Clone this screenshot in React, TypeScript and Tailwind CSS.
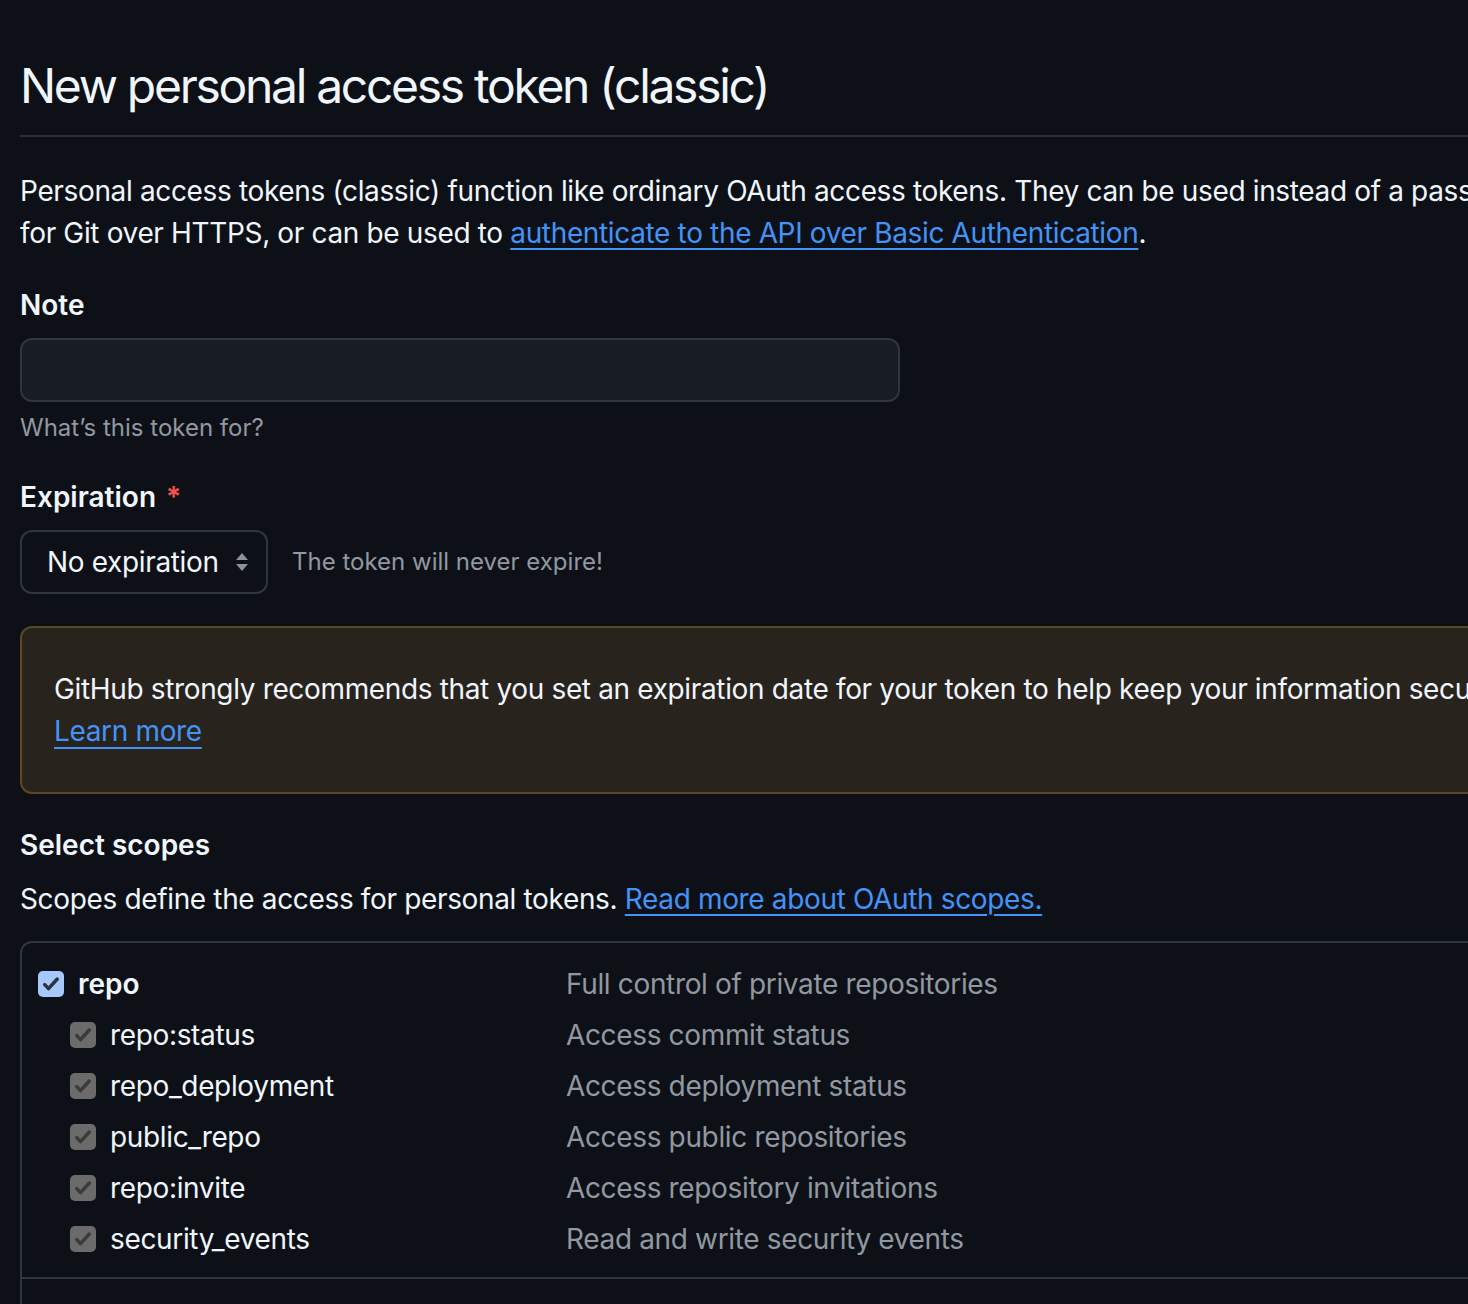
import React from 'react'

const scopes = [
  { name: 'repo:status', desc: 'Access commit status' },
  { name: 'repo_deployment', desc: 'Access deployment status' },
  { name: 'public_repo', desc: 'Access public repositories' },
  { name: 'repo:invite', desc: 'Access repository invitations' },
  { name: 'security_events', desc: 'Read and write security events' },
]

function Check({ primary }: { primary?: boolean }) {
  return (
    <span
      className={`flex h-[26px] w-[26px] shrink-0 items-center justify-center rounded-[5px] ${primary ? 'bg-[#a6c8ff]' : 'bg-[#6b6b6b]'}`}
    >
      <svg width="20" height="20" viewBox="0 0 16 16" fill="none">
        <path d="M3 8.5l3 3.2L13 4" stroke={primary ? '#2d333b' : '#3b3b3b'} strokeWidth="2.8" strokeLinecap="round" strokeLinejoin="round" />
      </svg>
    </span>
  )
}

export default function App() {
  return (
    <div className="min-h-[1304px] w-full overflow-hidden bg-[#0d1117] font-['Inter',sans-serif] text-[#f0f6fc]">
      <div className="w-[1900px] pl-[20px] pt-[56px]">
        {/* Header */}
        <div className="border-b-2 border-[#2a2f37] pb-[19px]">
          <h1 className="text-[48px] font-normal leading-[60px] tracking-[-2.3px]">New personal access token (classic)</h1>
        </div>

        <p className="mt-[33px] text-[28px] leading-[42px] tracking-[-0.35px] whitespace-nowrap">
          Personal access tokens (classic) function like ordinary OAuth access tokens. They can be used instead of a password
          <br />
          for Git over HTTPS, or can be used to{' '}
          <a className="text-[#4493f8] underline underline-offset-[5px] decoration-[2px]">authenticate to the API over Basic Authentication</a>.
        </p>

        {/* Note */}
        <div className="mt-[30px] text-[28px] font-semibold leading-[42px]">Note</div>
        <div className="mt-[12px] h-[64px] w-[880px] rounded-[12px] border-2 border-[#30363d] bg-[#181c23]" />
        <div className="mt-[8px] text-[24px] leading-[36px] text-[#9198a1]">What’s this token for?</div>

        {/* Expiration */}
        <div className="mt-[30px] flex items-center text-[28px] font-semibold leading-[42px]">
          Expiration
          <span className="ml-[10px] text-[#f85149]">*</span>
        </div>
        <div className="mt-[12px] flex items-center">
          <div className="flex h-[64px] w-[248px] items-center justify-between rounded-[12px] border-2 border-[#30363d] pl-[25px] pr-[16px] text-[28px] tracking-[-0.35px]">
            No expiration
            <svg width="16" height="24" viewBox="0 0 16 24">
              <path d="M8 3l6 7H2z" fill="#8b929b" />
              <path d="M8 21l6-7H2z" fill="#8b929b" />
            </svg>
          </div>
          <div className="ml-[24px] text-[24px] text-[#9198a1]">The token will never expire!</div>
        </div>

        {/* Warning */}
        <div className="mt-[32px] rounded-[12px] border-2 border-[#5b4720] bg-[#29231d] px-[32px] py-[40px] text-[28px] leading-[42px] tracking-[-0.35px] whitespace-nowrap">
          GitHub strongly recommends that you set an expiration date for your token to help keep your information secure.
          <br />
          <a className="text-[#4493f8] underline underline-offset-[6px] decoration-[2px]">Learn more</a>
        </div>

        {/* Scopes */}
        <div className="mt-[30px] text-[28px] font-semibold leading-[42px]">Select scopes</div>
        <p className="mt-[12px] text-[28px] leading-[42px] tracking-[-0.35px]">
          Scopes define the access for personal tokens.{' '}
          <a className="text-[#4493f8] underline underline-offset-[5px] decoration-[2px]">Read more about OAuth scopes.</a>
        </p>

        <div className="mt-[21px] rounded-tl-[12px] border-l-2 border-t-2 border-[#30363d] text-[28px] tracking-[-0.35px]">
          <div className="pb-[17px] pt-[20px] border-b-2 border-[#30363d]">
            <div className="flex h-[42px] items-center">
              <div className="flex w-[544px] items-center pl-[16px]">
                <Check primary />
                <span className="ml-[14px] font-semibold tracking-normal">repo</span>
              </div>
              <span className="text-[#9198a1]">Full control of private repositories</span>
            </div>
            {scopes.map(s => (
              <div key={s.name} className="mt-[9px] flex h-[42px] items-center">
                <div className="flex w-[544px] items-center pl-[48px]">
                  <Check />
                  <span className="ml-[14px]">{s.name}</span>
                </div>
                <span className="text-[#9198a1]">{s.desc}</span>
              </div>
            ))}
          </div>
          <div className="h-[40px]" />
        </div>
      </div>
    </div>
  )
}
